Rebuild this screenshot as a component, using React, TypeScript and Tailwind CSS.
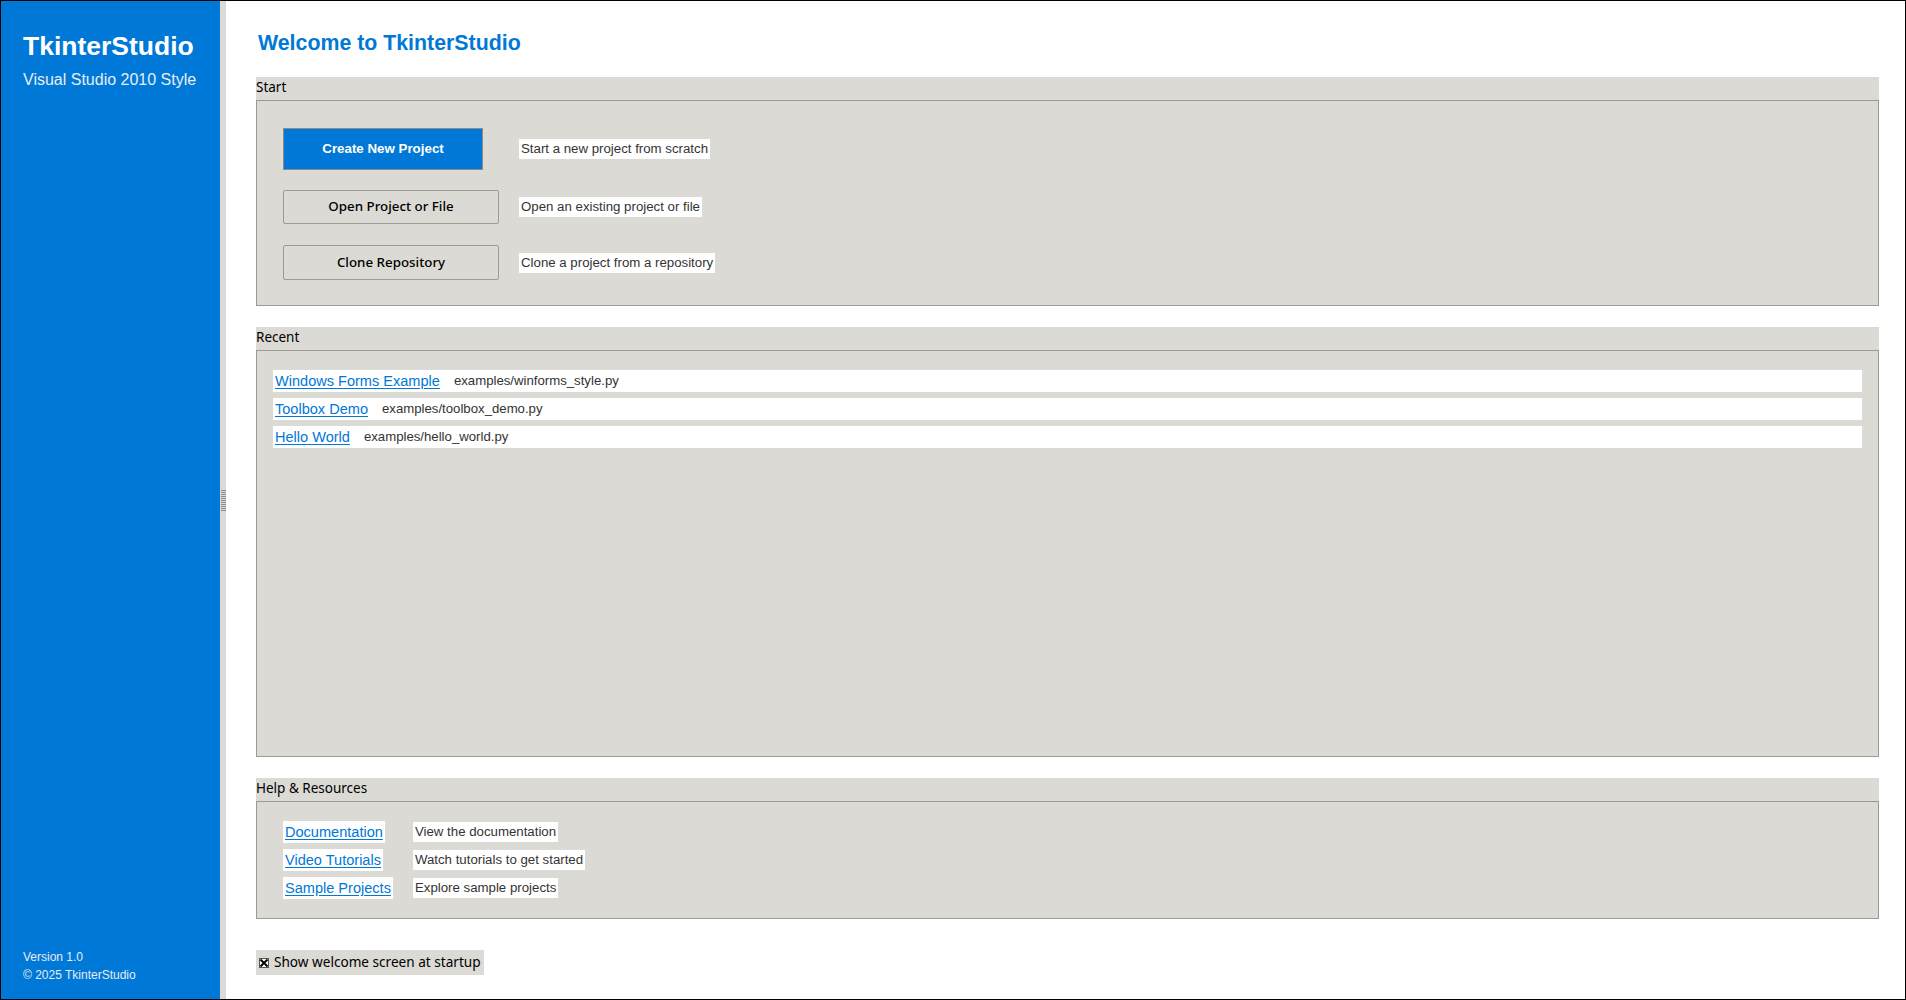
import React from 'react';

const sans = "font-['Liberation_Sans',Arial,sans-serif]";
const tk = "font-['Noto_Sans',sans-serif]";

const recent = [
    { name: 'Windows Forms Example', path: 'examples/winforms_style.py' },
    { name: 'Toolbox Demo', path: 'examples/toolbox_demo.py' },
    { name: 'Hello World', path: 'examples/hello_world.py' },
];

const help = [
    { name: 'Documentation', desc: 'View the documentation' },
    { name: 'Video Tutorials', desc: 'Watch tutorials to get started' },
    { name: 'Sample Projects', desc: 'Explore sample projects' },
];

const SectionHeader: React.FC<{ title: string }> = ({ title }) => (
    <div className={`h-[23px] leading-[21px] bg-[#dcdad5] text-[13.5px] text-black ${tk}`}>{title}</div>
);

const Desc: React.FC<{ text: string }> = ({ text }) => (
    <span className={`h-[20px] leading-[20px] px-[2px] bg-white text-[13.25px] text-[#333333] whitespace-nowrap ${sans}`}>
        {text}
    </span>
);

const App: React.FC = () => {
    return (
        <div className="w-[1906px] h-[1000px] border border-black flex overflow-hidden bg-white">
            {/* Sidebar */}
            <aside className={`w-[219px] shrink-0 bg-[#0078d7] flex flex-col justify-between pl-[22px] pt-[30px] pb-[15px] ${sans}`}>
                <div>
                    <div className="text-[26.5px] leading-[31px] font-bold text-white">TkinterStudio</div>
                    <div className="mt-[9px] text-[16px] leading-[18px] text-[#e8eef5]">Visual Studio 2010 Style</div>
                </div>
                <div className="text-[12px] leading-[18px] text-[#e6ecf2]">
                    <div>Version 1.0</div>
                    <div>© 2025 TkinterStudio</div>
                </div>
            </aside>

            {/* Sash */}
            <div className="w-[6px] shrink-0 bg-[#dcdad5] flex items-center justify-center">
                <div className="flex flex-col gap-[1px] pl-[1px]">
                    {Array.from({ length: 11 }).map((_, i) => (
                        <div key={i} className="w-[5px] h-[1px] bg-[#8f8b84]" />
                    ))}
                </div>
            </div>

            {/* Main */}
            <main className="flex-1 pl-[30px] pr-[26px] pt-[30px]">
                <h1 className={`pl-[2px] text-[21.33px] leading-[24px] font-bold text-[#0078d7] ${sans}`}>
                    Welcome to TkinterStudio
                </h1>

                {/* Start */}
                <div className="mt-[22px]">
                    <SectionHeader title="Start" />
                    <div className="border border-[#9e9a91] bg-[#dcdad5] pl-[26px] pt-[27px] pb-[25px]">
                        <div className="flex items-center h-[42px]">
                            <div className="w-[216px]">
                                <button className={`w-[200px] h-[42px] border border-[#8f8b84] bg-[#0078d7] text-white text-[13.33px] font-bold ${sans}`}>
                                    Create New Project
                                </button>
                            </div>
                            <div className="ml-[20px] flex"><Desc text="Start a new project from scratch" /></div>
                        </div>
                        <div className="flex items-center h-[34px] mt-[20px]">
                            <button className={`w-[216px] h-[34px] border border-[#9e9a91] rounded-[2px] bg-[#dcdad5] text-black text-[13.33px] font-medium ${tk}`}>
                                Open Project or File
                            </button>
                            <div className="ml-[20px] flex"><Desc text="Open an existing project or file" /></div>
                        </div>
                        <div className="flex items-center h-[35px] mt-[21px]">
                            <button className={`w-[216px] h-[35px] border border-[#9e9a91] rounded-[2px] bg-[#dcdad5] text-black text-[13.33px] font-medium ${tk}`}>
                                Clone Repository
                            </button>
                            <div className="ml-[20px] flex"><Desc text="Clone a project from a repository" /></div>
                        </div>
                    </div>
                </div>

                {/* Recent */}
                <div className="mt-[21px]">
                    <SectionHeader title="Recent" />
                    <div className="h-[407px] border border-[#9e9a91] bg-[#dcdad5] px-[16px] pt-[19px] flex flex-col gap-[6px]">
                        {recent.map((r) => (
                            <div key={r.name} className={`h-[22px] bg-white flex items-center gap-[14px] pl-[2px] whitespace-nowrap ${sans}`}>
                                <a className="text-[14.55px] leading-[20px] text-[#0078d7] underline underline-offset-[2px] cursor-pointer">{r.name}</a>
                                <span className="text-[13.2px] text-[#333333]">{r.path}</span>
                            </div>
                        ))}
                    </div>
                </div>

                {/* Help & Resources */}
                <div className="mt-[21px]">
                    <SectionHeader title="Help & Resources" />
                    <div className="border border-[#9e9a91] bg-[#dcdad5] pl-[26px] pt-[19px] pb-[19px]">
                        <div className="grid grid-cols-[auto_auto] w-max gap-x-[20px] gap-y-[6px]">
                            {help.map((h) => (
                                <React.Fragment key={h.name}>
                                    <a className={`justify-self-start h-[22px] leading-[22px] px-[2px] bg-white text-[14.55px] text-[#0078d7] underline underline-offset-[2px] cursor-pointer whitespace-nowrap ${sans}`}>
                                        {h.name}
                                    </a>
                                    <div className="justify-self-start self-center flex"><Desc text={h.desc} /></div>
                                </React.Fragment>
                            ))}
                        </div>
                    </div>
                </div>

                {/* Startup checkbox */}
                <label className={`mt-[31px] w-[228px] h-[25px] bg-[#dcdad5] flex items-center pl-[3px] gap-[5px] text-[13.6px] text-black whitespace-nowrap ${tk}`}>
                    <span className="w-[10px] h-[10px] border border-[#555] bg-white flex items-center justify-center">
                        <svg width="8" height="8" viewBox="0 0 8 8">
                            <path d="M0.5 0.5 L7.5 7.5 M7.5 0.5 L0.5 7.5" stroke="black" strokeWidth="2" />
                        </svg>
                    </span>
                    Show welcome screen at startup
                </label>
            </main>
        </div>
    );
};

export default App;
